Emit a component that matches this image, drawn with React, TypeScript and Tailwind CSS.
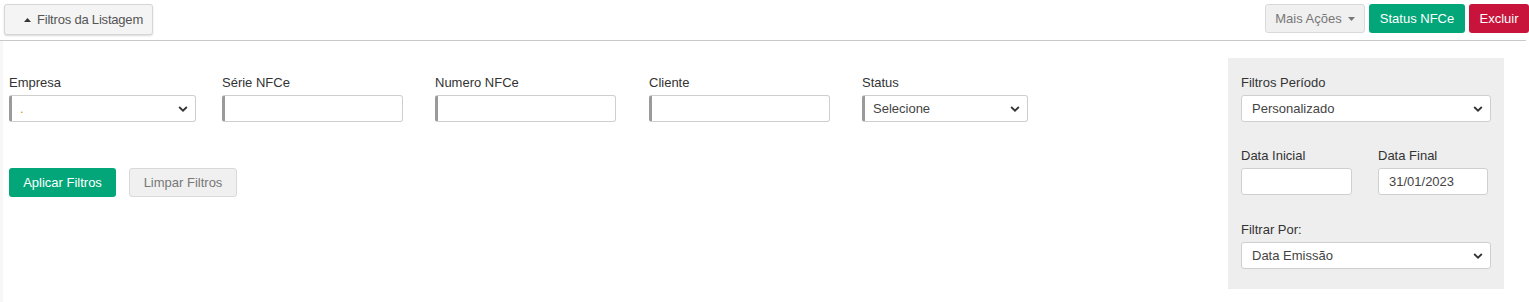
import { FC, ReactNode } from "react";

const Chevron: FC = () => (
  <svg width="10" height="7" viewBox="0 0 10 7" className="absolute right-[7px] top-1/2 -translate-y-1/2">
    <path d="M1.2 1.5 L5 5.2 L8.8 1.5" fill="none" stroke="#333" strokeWidth="1.8" />
  </svg>
);

const Field: FC<{ label: string; width: string; select?: boolean; value?: ReactNode; accent?: boolean }> = ({
  label,
  width,
  select,
  value,
  accent = true,
}) => (
  <div className={`flex flex-col ${width}`}>
    <label className="h-[17px] text-[13px] leading-[17px] text-[#333]">{label}</label>
    <div
      className={`relative mt-[4px] h-[27px] rounded-[3px] border border-[#cfcfcf] bg-white text-[13px] leading-[25px] text-[#444] ${
        accent ? "border-l-[3px] border-l-[#9a9a9a] pl-[8px]" : "pl-[10px]"
      }`}
    >
      {value}
      {select && <Chevron />}
    </div>
  </div>
);

export default function App() {
  return (
    <div className="h-[302px] w-full bg-white" style={{ fontFamily: "'Liberation Sans', Arial, sans-serif" }}>
      {/* barra superior */}
      <div className="flex h-[41px] items-start justify-between border-b border-[#c9c9c9] mr-[3px]">
        <button className="ml-[4px] mt-[4px] flex h-[31px] w-[149px] items-center rounded-[3px] border border-[#d6d6d6] bg-[#f4f4f4] pl-[19px] text-[13px] tracking-[-0.2px] text-[#555] shadow-[0_1px_2px_rgba(0,0,0,0.15)]">
          <svg width="7" height="4" viewBox="0 0 7 4" className="mr-[6px]">
            <path d="M0 4 L3.5 0 L7 4 Z" fill="#333" />
          </svg>
          Filtros da Listagem
        </button>
        <div className="mt-[4px] mr-[-3px] flex gap-[4px]">
          <button className="flex h-[29px] w-[100px] items-center justify-center rounded-[3px] border border-[#d9d9d9] bg-[#f0f0f0] text-[13px] text-[#777]">
            Mais Ações
            <svg width="7" height="4" viewBox="0 0 7 4" className="ml-[6px]">
              <path d="M0 0 L3.5 4 L7 0 Z" fill="#777" />
            </svg>
          </button>
          <button className="h-[29px] w-[96px] rounded-[3px] bg-[#03a679] text-[13px] font-medium text-white">
            Status NFCe
          </button>
          <button className="h-[29px] w-[60px] rounded-[3px] bg-[#c8143a] text-[13px] font-medium text-white">
            Excluir
          </button>
        </div>
      </div>

      {/* corpo */}
      <div className="flex h-[261px]">
        <div className="w-[3px] bg-[#f7f7f7]" />
        <div className="flex-1 pl-[6px] pt-[33px]">
          <div className="flex">
            <Field label="Empresa" width="w-[187px] mr-[26px]" select value={<span className="text-[#e08a00]">.</span>} />
            <Field label="Série NFCe" width="w-[181px] mr-[32px]" />
            <Field label="Numero NFCe" width="w-[181px] mr-[33px]" />
            <Field label="Cliente" width="w-[181px] mr-[32px]" />
            <Field label="Status" width="w-[166px]" select value="Selecione" />
          </div>
          <div className="mt-[46px] flex gap-[13px]">
            <button className="h-[29px] w-[107px] rounded-[3px] bg-[#03a679] text-[13px] font-medium text-white">
              Aplicar Filtros
            </button>
            <button className="h-[29px] w-[108px] rounded-[3px] border border-[#d9d9d9] bg-[#f0f0f0] text-[13px] text-[#777]">
              Limpar Filtros
            </button>
          </div>
        </div>

        {/* filtros de período */}
        <div className="mr-[25px] mt-[17px] h-[231px] w-[276px] bg-[#eeeeee] pl-[13px] pr-[14px] pt-[16px]">
          <Field label="Filtros Período" width="w-[250px]" select value="Personalizado" accent={false} />
          <div className="mt-[25px] flex gap-[26px]">
            <Field label="Data Inicial" width="w-[111px]" accent={false} />
            <Field label="Data Final" width="w-[110px]" value="31/01/2023" accent={false} />
          </div>
          <div className="mt-[26px]">
            <Field label="Filtrar Por:" width="w-[250px]" select value="Data Emissão" accent={false} />
          </div>
        </div>
      </div>
    </div>
  );
}
